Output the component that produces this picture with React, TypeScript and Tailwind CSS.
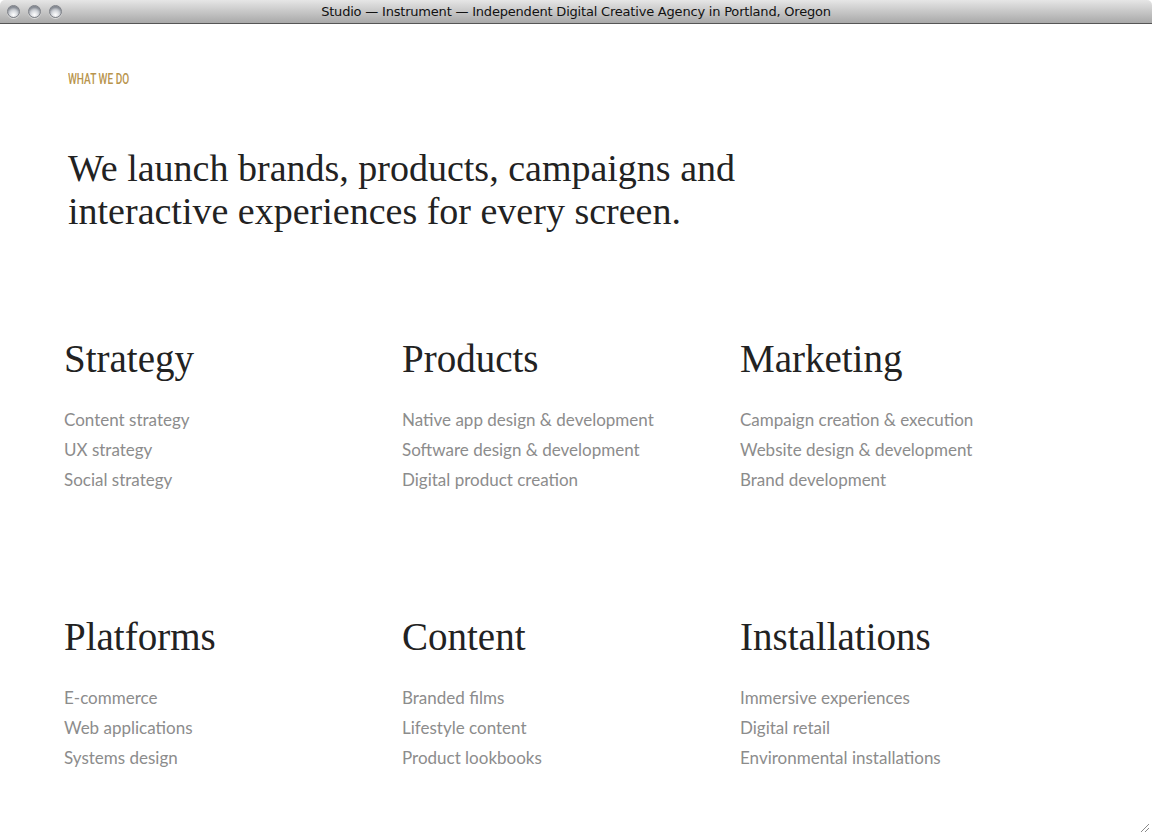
import React from "react";

const sections = [
  { title: "Strategy", items: ["Content strategy", "UX strategy", "Social strategy"] },
  { title: "Products", items: ["Native app design & development", "Software design & development", "Digital product creation"] },
  { title: "Marketing", items: ["Campaign creation & execution", "Website design & development", "Brand development"] },
  { title: "Platforms", items: ["E-commerce", "Web applications", "Systems design"] },
  { title: "Content", items: ["Branded films", "Lifestyle content", "Product lookbooks"] },
  { title: "Installations", items: ["Immersive experiences", "Digital retail", "Environmental installations"] },
];

function Light() {
  return (
    <span className="block w-[13px] h-[13px] rounded-full border border-[#7d8087] bg-[radial-gradient(circle_at_50%_80%,#ffffff_0%,#d4d7dc_40%,#8c9098_100%)] shadow-[inset_0_2px_2px_rgba(90,95,105,0.5),0_1px_0_rgba(255,255,255,0.5)]" />
  );
}

export default function App() {
  return (
    <div className="w-[1152px] h-[835px] bg-white overflow-hidden relative">
      <div className="h-[24px] rounded-t-[5px] bg-gradient-to-b from-[#e6e6e6] to-[#a9a9a9] border-b border-[#555] flex items-center relative">
        <div className="flex gap-[8px] pl-[7px]">
          <Light />
          <Light />
          <Light />
        </div>
        <div className="absolute inset-0 flex items-center justify-center text-[13px] text-[#111] font-['DejaVu_Sans',sans-serif] tracking-[-0.2px]">
          Studio — Instrument — Independent Digital Creative Agency in Portland, Oregon
        </div>
      </div>

      <div className="pl-[64px] pt-[47px]">
        <div className="pl-[4px] h-[14px] leading-[14px]">
          <span className="inline-block origin-left scale-x-[0.72] text-[14px] font-medium text-[#b8944c] font-['Roboto',sans-serif]">
            WHAT WE DO
          </span>
        </div>
        <h1 className="pl-[4px] mt-[62px] text-[38px] leading-[43px] text-[#222] font-['Liberation_Serif',serif] font-normal">
          We launch brands, products, campaigns and
          <br />
          interactive experiences for every screen.
        </h1>

        <div className="mt-[104px] grid grid-cols-3 w-[1014px] gap-y-[120px]">
          {sections.map((s) => (
            <div key={s.title}>
              <h2 className="text-[39px] leading-[44px] text-[#222] font-['Liberation_Serif',serif] font-normal">
                {s.title}
              </h2>
              <ul className="mt-[24px] flex flex-col">
                {s.items.map((i) => (
                  <li key={i} className="text-[17px] leading-[30px] text-[#8c8c8c] font-['Lato',sans-serif]">
                    {i}
                  </li>
                ))}
              </ul>
            </div>
          ))}
        </div>
      </div>

      <svg className="absolute right-[2px] bottom-[2px]" width="12" height="12" viewBox="0 0 12 12">
        <path d="M11 3 L3 11 M11 7 L7 11" stroke="#8a8a8a" strokeWidth="1" />
        <path d="M11 4 L4 11 M11 8 L8 11" stroke="#fff" strokeWidth="1" />
      </svg>
    </div>
  );
}
